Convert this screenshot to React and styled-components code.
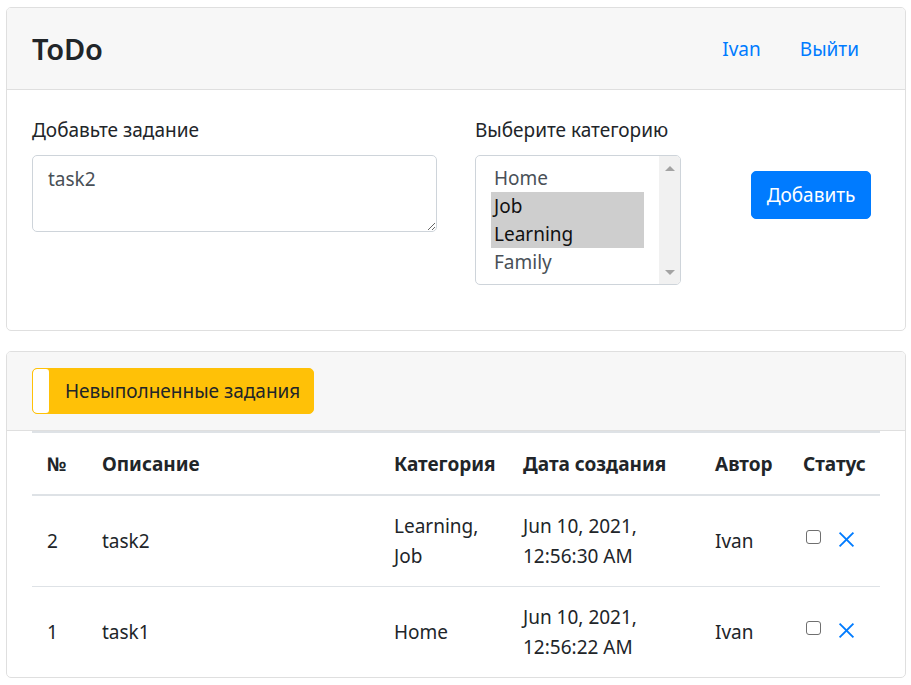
import React from "react";
import styled, { createGlobalStyle } from "styled-components";

const FS = "19px";

const GlobalStyle = createGlobalStyle`
  * { box-sizing: border-box; }
  body {
    margin: 0;
    background: #fff;
    color: #212529;
    font-family: "Noto Sans", "Open Sans", sans-serif;
    font-size: ${FS};
    line-height: 30px;
  }
`;

const categories = ["Home", "Job", "Learning", "Family"];
const selected = ["Job", "Learning"];

const tasks = [
  { id: 2, text: "task2", cats: ["Learning,", "Job"], date: ["Jun 10, 2021,", "12:56:30 AM"], author: "Ivan" },
  { id: 1, text: "task1", cats: ["Home"], date: ["Jun 10, 2021,", "12:56:22 AM"], author: "Ivan" },
];

const columns = [
  { title: "№", width: 55 },
  { title: "Описание", width: 292 },
  { title: "Категория", width: 129 },
  { title: "Дата создания", width: 192 },
  { title: "Автор", width: 88 },
  { title: "Статус", width: 92 },
];

const App = () => {
  return (
    <>
      <GlobalStyle />
      <Page>
        <Card>
          <CardHeader>
            <Navbar>
              <Brand>ToDo</Brand>
              <Nav>
                <NavLink href="#">Ivan</NavLink>
                <NavLink href="#">Выйти</NavLink>
              </Nav>
            </Navbar>
          </CardHeader>
          <CardBody>
            <FormRow>
              <FormGroup width="405px">
                <Label>Добавьте задание</Label>
                <TextArea rows={2} defaultValue="task2" />
              </FormGroup>
              <FormGroup width="206px">
                <Label>Выберите категорию</Label>
                <ListBox>
                  <OptionList>
                    {categories.map((c) => (
                      <Option key={c} selected={selected.includes(c)}>{c}</Option>
                    ))}
                  </OptionList>
                  <ScrollTrack>
                    <Arrow up />
                    <Arrow />
                  </ScrollTrack>
                </ListBox>
              </FormGroup>
              <AddButton>Добавить</AddButton>
            </FormRow>
          </CardBody>
        </Card>

        <Card>
          <CardHeader compact>
            <FilterButton>
              <ToggleBox />
              Невыполненные задания
            </FilterButton>
          </CardHeader>
          <TableBody>
            <Table>
              <colgroup>
                {columns.map((c) => (
                  <col key={c.title} style={{ width: c.width }} />
                ))}
              </colgroup>
              <thead>
                <tr>
                  {columns.map((c) => (
                    <Th key={c.title}>{c.title}</Th>
                  ))}
                </tr>
              </thead>
              <tbody>
                {tasks.map((t) => (
                  <Tr key={t.id}>
                    <Td>{t.id}</Td>
                    <Td>{t.text}</Td>
                    <Td>{t.cats.map((c) => <Line key={c}>{c}</Line>)}</Td>
                    <Td>{t.date.map((d) => <Line key={d}>{d}</Line>)}</Td>
                    <Td>{t.author}</Td>
                    <Td>
                      <Status>
                        <CheckBox />
                        <RemoveIcon viewBox="0 0 16 16">
                          <line x1="1.5" y1="1.5" x2="14.5" y2="14.5" />
                          <line x1="14.5" y1="1.5" x2="1.5" y2="14.5" />
                        </RemoveIcon>
                      </Status>
                    </Td>
                  </Tr>
                ))}
              </tbody>
            </Table>
          </TableBody>
        </Card>
      </Page>
    </>
  );
};

export default App;

const Page = styled.div`
  display: flex;
  flex-direction: column;
  gap: 20px;
  padding: 7px 5px 7px 6px;
`;

const Card = styled.div`
  border: 1px solid #dfdfdf;
  border-radius: 5px;
  background: #fff;
  overflow: hidden;
`;

const CardHeader = styled.div`
  background: #f7f7f7;
  border-bottom: 1px solid #dfdfdf;
  padding: ${(p) => (p.compact ? "16px 25px 16px" : "15px 25px")};
`;

const Navbar = styled.div`
  display: flex;
  align-items: center;
  justify-content: space-between;
  height: 51px;
`;

const Brand = styled.div`
  font-size: 29px;
  font-weight: 600;
  color: #212529;
  letter-spacing: -0.2px;
`;

const Nav = styled.nav`
  display: flex;
`;

const NavLink = styled.a`
  color: #007bff;
  text-decoration: none;
  padding: 10px 20px;
  &:last-child { padding-left: 19px; padding-right: 21px; }
`;

const CardBody = styled.div`
  padding: 25px 25px 45px;
`;

const FormRow = styled.div`
  display: flex;
  align-items: flex-start;
`;

const FormGroup = styled.div`
  width: ${(p) => p.width};
  display: flex;
  flex-direction: column;
  margin-right: 38px;
`;

const Label = styled.label`
  margin-bottom: 10px;
  line-height: 30px;
`;

const TextArea = styled.textarea`
  height: 77px;
  border: 1px solid #ced4da;
  border-radius: 5px;
  padding: 8px 15px 7px;
  font-family: inherit;
  font-size: ${FS};
  line-height: 30px;
  color: #495057;
  resize: vertical;
  outline: none;
`;

const ListBox = styled.div`
  display: flex;
  height: 130px;
  border: 1px solid #ced4da;
  border-radius: 5px;
  overflow: hidden;
`;

const OptionList = styled.div`
  flex: 1;
  padding: 8px 15px 7px;
`;

const Option = styled.div`
  height: 28px;
  line-height: 28px;
  padding-left: 3px;
  color: ${(p) => (p.selected ? "#111" : "#495057")};
  background: ${(p) => (p.selected ? "#cecece" : "transparent")};
`;

const ScrollTrack = styled.div`
  width: 21px;
  background: #f1f1f1;
  display: flex;
  flex-direction: column;
  justify-content: space-between;
  align-items: center;
  padding: 10px 0 9px;
`;

const Arrow = styled.span`
  width: 0;
  height: 0;
  border-left: 5px solid transparent;
  border-right: 5px solid transparent;
  ${(p) => (p.up ? "border-bottom: 5px solid #a3a3a3;" : "border-top: 5px solid #a3a3a3;")}
`;

const AddButton = styled.button`
  margin: 56px 0 0 32px;
  width: 120px;
  height: 48px;
  border: 1px solid #007bff;
  border-radius: 5px;
  background: #007bff;
  color: #fff;
  font-family: inherit;
  font-size: ${FS};
  line-height: 30px;
  padding: 0;
`;

const FilterButton = styled.button`
  display: flex;
  align-items: center;
  height: 46px;
  padding: 0 13px 0 0;
  background: #ffc107;
  border: 1px solid #ffc107;
  border-radius: 5px;
  color: #212529;
  font-family: inherit;
  font-size: ${FS};
  line-height: 30px;
  overflow: hidden;
`;

const ToggleBox = styled.span`
  align-self: stretch;
  width: 16px;
  background: #fff;
  border-radius: 4px 3px 3px 4px;
  margin-right: 16px;
`;

const TableBody = styled.div`
  padding: 0 25px;
`;

const Table = styled.table`
  width: 100%;
  border-collapse: collapse;
  table-layout: fixed;
  border-top: 2px solid #dee2e6;
`;

const Th = styled.th`
  text-align: left;
  font-weight: 700;
  padding: 16px 15px 15px;
  line-height: 30px;
  border-bottom: 2px solid #dee2e6;
  white-space: nowrap;
`;

const Tr = styled.tr`
  & + & td { border-top: 1px solid #dee2e6; }
`;

const Td = styled.td`
  padding: 15px;
  line-height: 30px;
  vertical-align: middle;
`;

const Line = styled.div``;

const Status = styled.div`
  display: flex;
  align-items: flex-start;
  padding-left: 3px;
  margin-top: -5px;
`;

const CheckBox = styled.span`
  width: 15px;
  height: 14px;
  border: 1.5px solid #6f6f6f;
  border-radius: 3px;
  background: #fff;
  margin-right: 17px;
`;

const RemoveIcon = styled.svg`
  width: 17px;
  height: 17px;
  margin-top: 1px;
  stroke: #007bff;
  stroke-width: 1.8;
  fill: none;
`;
